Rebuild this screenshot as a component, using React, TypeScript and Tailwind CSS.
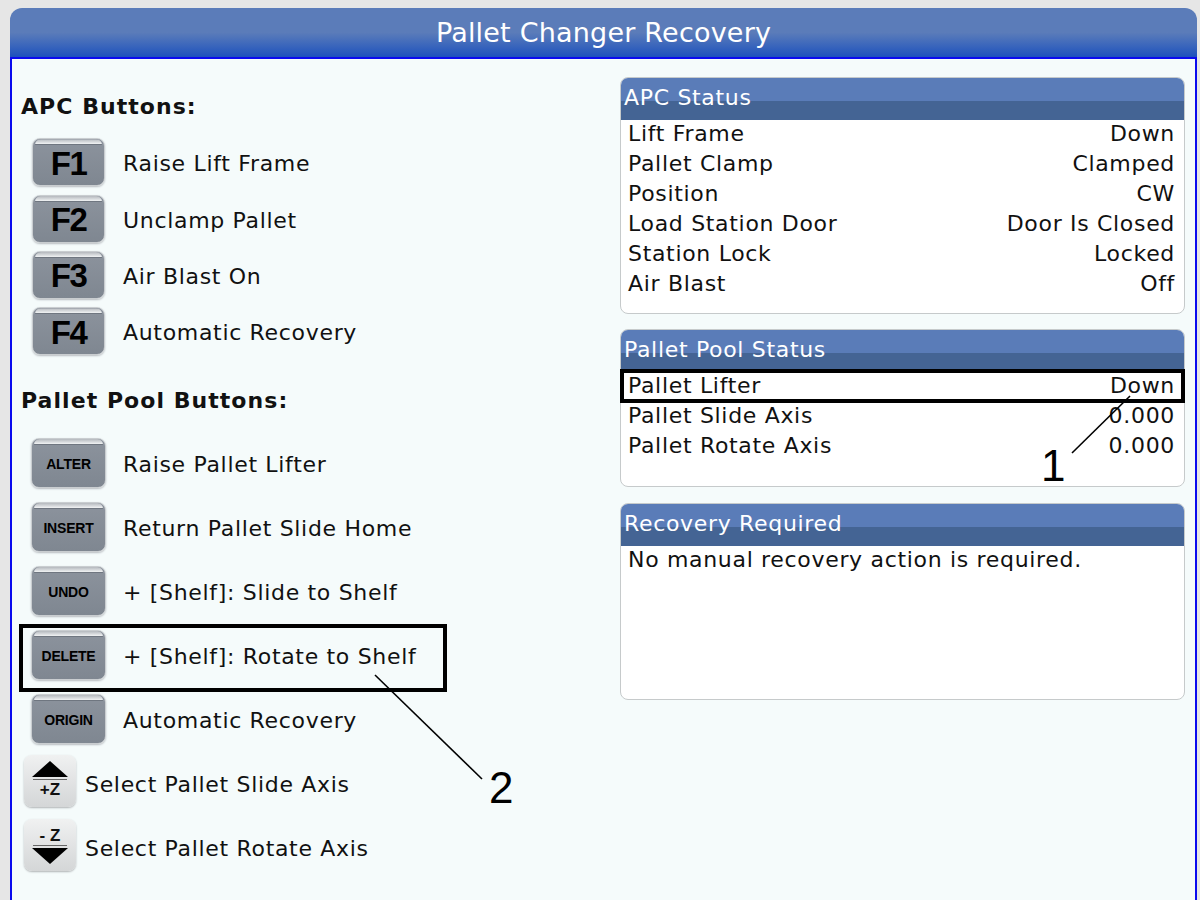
const UI_FONT = "font-['DejaVu_Sans',sans-serif]";

function KeyCap({ label, small }: { label: string; small?: boolean }) {
    return (
        <div className={`relative flex items-center justify-center rounded-lg border border-[#c9cdd0] bg-gradient-to-b from-[#8c939d] to-[#7f8791] font-['Liberation_Sans',sans-serif] font-bold text-black shadow-[0_1px_2px_#b8bcc0] ${small ? 'h-[50px] w-[75px] text-[14px] tracking-[-0.2px]' : 'h-[48px] w-[73px] text-[33px] tracking-[-1.5px]'}`}>
            <div className="absolute inset-x-[2px] top-0 h-[6px] rounded-t-lg bg-gradient-to-b from-[#b4b8bd] to-[#f1f3f4] border-b border-[#6f7680]" />
            <span className="mt-[3px]">{label}</span>
        </div>
    );
}

function ArrowCap({ dir }: { dir: 'up' | 'down' }) {
    const up = dir === 'up';
    return (
        <div className="mb-[3px] flex h-[52px] w-[52px] flex-col items-center rounded-lg bg-gradient-to-b from-[#f0f1f1] to-[#d4d6d7] shadow-[0_1px_2px_#b0b3b5] font-['Liberation_Sans',sans-serif] text-[17px] font-bold leading-[16px] text-[#111]">
            {up ? (
                <>
                    <svg className="mt-[6px]" width="36" height="16" viewBox="0 0 36 16"><path d="M18 0 L36 16 H0 Z" fill="#000" /></svg>
                    <div className="mt-[2px] h-px w-[34px] bg-[#666]" />
                    <span className="mt-[2px] tracking-normal">+Z</span>
                </>
            ) : (
                <>
                    <span className="mt-[9px] tracking-normal">- Z</span>
                    <div className="mt-[1px] h-px w-[34px] bg-[#666]" />
                    <svg className="mt-[2px]" width="36" height="16" viewBox="0 0 36 16"><path d="M0 0 H36 L18 16 Z" fill="#000" /></svg>
                </>
            )}
        </div>
    );
}

function Row({ cap, text, h, gap }: { cap: React.ReactNode; text: string; h: string; gap: string }) {
    return (
        <div className={`flex items-center ${h} ${gap}`}>
            {cap}
            <span className="pt-[4px]">{text}</span>
        </div>
    );
}

function Panel({ title, h, children }: { title: string; h: string; children: React.ReactNode }) {
    return (
        <div className={`relative flex flex-col overflow-hidden rounded-lg border border-[#c6cacb] bg-white ${h}`}>
            <div className="relative h-[42px] shrink-0 bg-[#5a7cb8]">
                <div className="absolute inset-x-0 bottom-0 h-[19px] bg-[#446494]" />
                <span className="absolute left-[3px] top-[6px] text-[22px] leading-[28px] text-white">{title}</span>
            </div>
            <div className="-mt-px px-[7px]">{children}</div>
        </div>
    );
}

function StatusRow({ label, value }: { label: string; value: string }) {
    return (
        <div className="flex h-[30px] items-center justify-between pr-[2px]">
            <span>{label}</span>
            <span>{value}</span>
        </div>
    );
}

const apc = [
    ['F1', 'Raise Lift Frame'],
    ['F2', 'Unclamp Pallet'],
    ['F3', 'Air Blast On'],
    ['F4', 'Automatic Recovery'],
];
const pool = [
    ['ALTER', 'Raise Pallet Lifter'],
    ['INSERT', 'Return Pallet Slide Home'],
    ['UNDO', '+ [Shelf]: Slide to Shelf'],
    ['DELETE', '+ [Shelf]: Rotate to Shelf'],
    ['ORIGIN', 'Automatic Recovery'],
];

export default function App() {
    return (
        <div className={`relative h-[900px] w-[1200px] overflow-hidden bg-[#e6e6e6] pl-[10px] pr-[3px] pt-[8px] ${UI_FONT} text-[22px] leading-[28px] tracking-[0.68px] text-[#111]`}>
            {/* title bar */}
            <div className="flex h-[49px] items-center justify-center rounded-t-xl bg-gradient-to-b from-[#5b7cb9] from-50% to-[#1c50bd] text-[27px] tracking-[0.2px] text-white">
                Pallet Changer Recovery
            </div>

            {/* body */}
            <div className="flex h-[843px] border-2 border-b-0 border-[#0a0aee] bg-[#f5fbfb]">
                {/* left column */}
                <div className="w-[608px] shrink-0 pl-[9px]">
                    <div className="mt-[34px] h-[28px] font-bold tracking-[1.05px]">APC Buttons:</div>
                    <div className="ml-[11px] mt-[13px]">
                        {apc.map(([k, t]) => (
                            <Row key={k} cap={<KeyCap label={k} />} text={t} h="h-[56.4px]" gap="gap-[18px]" />
                        ))}
                    </div>
                    <div className="mt-[27px] h-[28px] font-bold tracking-[1.05px]">Pallet Pool Buttons:</div>
                    <div className="ml-[10px] mt-[16px]">
                        {pool.map(([k, t]) => (
                            <Row key={k} cap={<KeyCap label={k} small />} text={t} h="h-[64px]" gap="gap-[17px]" />
                        ))}
                    </div>
                    <div className="ml-[3px]">
                        <Row cap={<ArrowCap dir="up" />} text="Select Pallet Slide Axis" h="h-[64px]" gap="gap-[9px]" />
                        <Row cap={<ArrowCap dir="down" />} text="Select Pallet Rotate Axis" h="h-[64px]" gap="gap-[9px]" />
                    </div>
                </div>

                {/* right column */}
                <div className="flex w-[565px] shrink-0 flex-col gap-[15px] pt-[18px]">
                    <Panel title="APC Status" h="h-[237px]">
                        <StatusRow label="Lift Frame" value="Down" />
                        <StatusRow label="Pallet Clamp" value="Clamped" />
                        <StatusRow label="Position" value="CW" />
                        <StatusRow label="Load Station Door" value="Door Is Closed" />
                        <StatusRow label="Station Lock" value="Locked" />
                        <StatusRow label="Air Blast" value="Off" />
                    </Panel>
                    <Panel title="Pallet Pool Status" h="h-[158px]">
                        <StatusRow label="Pallet Lifter" value="Down" />
                        <StatusRow label="Pallet Slide Axis" value="0.000" />
                        <StatusRow label="Pallet Rotate Axis" value="0.000" />
                    </Panel>
                    <Panel title="Recovery Required" h="mt-px h-[197px]">
                        <div className="flex h-[30px] items-center">No manual recovery action is required.</div>
                    </Panel>
                </div>
            </div>

            {/* callouts drawn over the screen */}
            <div className="absolute left-[19px] top-[624px] h-[68px] w-[428px] border-4 border-black" />
            <div className="absolute left-[620px] top-[369px] h-[34px] w-[565px] border-4 border-black" />
            <svg className="absolute left-0 top-0" width="1200" height="900" fill="none">
                <path d="M375 675 L482 779" stroke="#000" strokeWidth="1.6" />
                <path d="M1130 396 L1072 453" stroke="#000" strokeWidth="1.6" />
            </svg>
            <span className="absolute left-[1041px] top-[443px] font-['Liberation_Sans',sans-serif] text-[44px] leading-[46px] tracking-normal text-black">1</span>
            <span className="absolute left-[489px] top-[765px] font-['Liberation_Sans',sans-serif] text-[44px] leading-[46px] tracking-normal text-black">2</span>
        </div>
    );
}
